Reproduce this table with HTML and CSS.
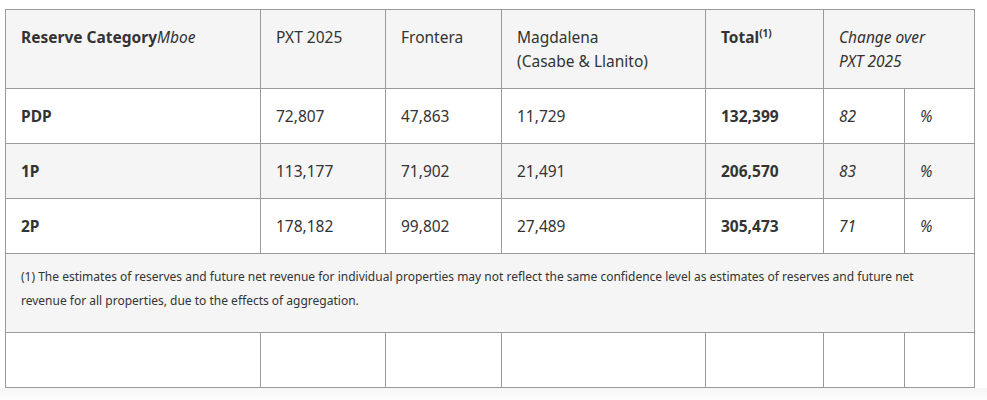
FILE: index.html
```html
<!DOCTYPE html>
<html lang="en">
<head>
<meta charset="utf-8">
<title>Reserves</title>
<link rel="stylesheet" href="styles.css">
</head>
<body>
<div class="page">
  <table class="reserves">
    <colgroup>
      <col class="c1"><col class="c2"><col class="c3"><col class="c4"><col class="c5"><col class="c6"><col class="c7">
    </colgroup>
    <thead>
      <tr>
        <th><strong>Reserve Category</strong><em>Mboe</em></th>
        <th>PXT 2025</th>
        <th>Frontera</th>
        <th>Magdalena<br>(Casabe &amp; Llanito)</th>
        <th><strong>Total<sup>(1)</sup></strong></th>
        <th colspan="2"><em>Change over<br>PXT 2025</em></th>
      </tr>
    </thead>
    <tbody>
      <tr>
        <td><strong>PDP</strong></td>
        <td>72,807</td>
        <td>47,863</td>
        <td>11,729</td>
        <td><strong>132,399</strong></td>
        <td><em>82</em></td>
        <td><em>%</em></td>
      </tr>
      <tr class="alt">
        <td><strong>1P</strong></td>
        <td>113,177</td>
        <td>71,902</td>
        <td>21,491</td>
        <td><strong>206,570</strong></td>
        <td><em>83</em></td>
        <td><em>%</em></td>
      </tr>
      <tr>
        <td><strong>2P</strong></td>
        <td>178,182</td>
        <td>99,802</td>
        <td>27,489</td>
        <td><strong>305,473</strong></td>
        <td><em>71</em></td>
        <td><em>%</em></td>
      </tr>
      <tr class="alt note">
        <td colspan="7">(1) The estimates of reserves and future net revenue for individual properties may not reflect the same confidence level as estimates of reserves and future net revenue for all properties, due to the effects of aggregation.</td>
      </tr>
      <tr class="empty">
        <td></td><td></td><td></td><td></td><td></td><td></td><td></td>
      </tr>
    </tbody>
  </table>
</div>
<div class="scrollstrip"></div>
</body>
</html>
```
FILE: styles.css
```css
html, body {
  margin: 0;
  padding: 0;
  background: #ffffff;
}
body {
  font-family: "Noto Sans", "Liberation Sans", sans-serif;
  color: #333333;
  width: 987px;
  height: 400px;
  overflow: hidden;
}
.page {
  padding: 9px 0 0 5px;
  height: 379px;
}
.reserves {
  border-collapse: collapse;
  table-layout: fixed;
  width: 969px;
  font-size: 15.5px;
  line-height: 24px;
}
.c1 { width: 255px; }
.c2 { width: 125px; }
.c3 { width: 116px; }
.c4 { width: 204px; }
.c5 { width: 118px; }
.c6 { width: 81px; }
.c7 { width: 70px; }
.reserves th,
.reserves td {
  border: 1px solid #9a9a9a;
  padding: 15px;
  text-align: left;
  vertical-align: top;
  font-weight: 400;
}
.reserves thead th {
  background: #f5f5f5;
  height: 48px;
}
.reserves tbody td {
  height: 24px;
}
.reserves strong { font-weight: 700; }
.reserves em { font-style: italic; }
.reserves sup {
  font-size: 10px;
  line-height: 0;
  vertical-align: 6px;
}
.alt td { background: #f5f5f5; }
.note td {
  font-size: 12px;
  padding-top: 11px;
  padding-bottom: 19px;
  height: 48px;
}
.empty td { height: 24px; }
.scrollstrip {
  height: 12px;
  background: linear-gradient(#f6f6f6, #fcfcfc);
}
```
